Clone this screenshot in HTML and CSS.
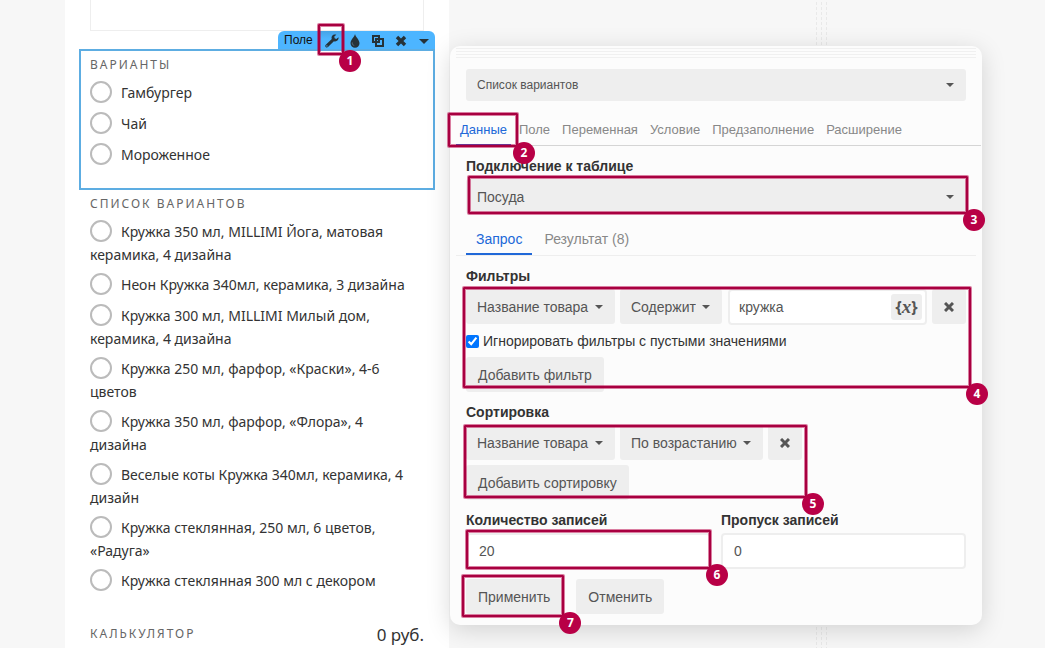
FILE: index.html
```html
<!DOCTYPE html>
<html lang="ru">
<head>
  <meta charset="UTF-8" />
  <meta name="viewport" content="width=device-width, initial-scale=1.0" />
  <title>Список вариантов</title>
  <link rel="stylesheet" href="styles.css">
</head>
<body>
  <div class="guides"></div>
  <div class="page">
    <main class="form">
      <div class="empty-field"></div>

      <div class="toolbar">
        <span class="toolbar-title">Поле</span>
        <button class="tool tool-active mark" aria-label="Настройки">
          <svg width="14" height="14" viewBox="0 0 14 14"><path d="M13.5 3.3 11.3 4.9 9.6 4.3 9.3 2.6 11.3.8C9.6.1 7.7.6 6.9 2.2c-.5 1-.4 1.9-.1 2.7L.8 10.7c-.7.7-.7 1.7-.1 2.3.6.7 1.7.7 2.3.1l5.9-5.9c1.3.5 2.8.2 3.8-.9.8-.8 1-2 .8-3zM1.9 12.6a.7.7 0 1 1 0-1.4.7.7 0 0 1 0 1.4z"/></svg>
          <span class="frame frame-tool"><span class="badge">1</span></span>
        </button>
        <button class="tool" aria-label="Цвет">
          <svg width="10" height="14" viewBox="0 0 10 14"><path d="M5 0C4.600 2.800.500 5.700.500 9.200a4.500 4.500 0 0 0 9 0C9.500 5.700 5.400 2.800 5 0z"/><path class="shine" d="M2.300 8.500c-.2 1.600.6 2.700 1.900 3"/></svg>
        </button>
        <button class="tool" aria-label="Копировать">
          <svg class="line-icon" width="12" height="12" viewBox="0 0 12 12"><path d="M1 1h6v6H1zM4 4h7v7H4z"/></svg>
        </button>
        <button class="tool" aria-label="Удалить">
          <svg width="12" height="12" viewBox="0 0 12 12"><path d="M3.200.8 6 3.600 8.800.8l2.400 2.400L8.400 6l2.800 2.800-2.400 2.400L6 8.400l-2.800 2.800L.8 8.800 3.600 6 .8 3.200z"/></svg>
        </button>
        <button class="tool" aria-label="Ещё">
          <svg width="10" height="5" viewBox="0 0 10 5"><path d="M0 0h10L5 5z"/></svg>
        </button>
      </div>

      <fieldset class="field field-selected">
        <legend class="field-title">Варианты</legend>
        <label class="option"><input type="radio" name="variant">Гамбургер</label>
        <label class="option"><input type="radio" name="variant">Чай</label>
        <label class="option"><input type="radio" name="variant">Мороженное</label>
      </fieldset>

      <fieldset class="field">
        <legend class="field-title">Список вариантов</legend>
        <label class="option"><input type="radio" name="mug">Кружка 350 мл, MILLIMI Йога, матовая керамика, 4 дизайна</label>
        <label class="option"><input type="radio" name="mug">Неон Кружка 340мл, керамика, 3 дизайна</label>
        <label class="option"><input type="radio" name="mug">Кружка 300 мл, MILLIMI Милый дом, керамика, 4 дизайна</label>
        <label class="option"><input type="radio" name="mug">Кружка 250 мл, фарфор, «Краски», 4-6 цветов</label>
        <label class="option"><input type="radio" name="mug">Кружка 350 мл, фарфор, «Флора», 4 дизайна</label>
        <label class="option"><input type="radio" name="mug">Веселые коты Кружка 340мл, керамика, 4 дизайн</label>
        <label class="option"><input type="radio" name="mug">Кружка стеклянная, 250 мл, 6 цветов, «Радуга»</label>
        <label class="option"><input type="radio" name="mug">Кружка стеклянная 300 мл с декором</label>
      </fieldset>

      <div class="total">
        <span class="field-title">Калькулятор</span>
        <output class="price">0 руб.</output>
      </div>
    </main>

    <aside class="panel">
      <div class="grip"></div>
      <div class="select select-type">
        <select aria-label="Тип поля"><option>Список вариантов</option></select>
      </div>

      <nav class="tabs">
        <a class="tab tab-active mark" href="#data">Данные<span class="frame frame-tab"><span class="badge">2</span></span></a>
        <a class="tab" href="#field">Поле</a>
        <a class="tab" href="#variable">Переменная</a>
        <a class="tab" href="#condition">Условие</a>
        <a class="tab" href="#prefill">Предзаполнение</a>
        <a class="tab" href="#extend">Расширение</a>
      </nav>

      <label class="label" for="table">Подключение к таблице</label>
      <div class="select mark">
        <select id="table"><option>Посуда</option></select>
        <span class="frame frame-table"><span class="badge">3</span></span>
      </div>

      <nav class="subtabs">
        <a class="subtab subtab-active" href="#query">Запрос</a>
        <a class="subtab" href="#result">Результат (8)</a>
      </nav>

      <div class="label">Фильтры</div>
      <div class="mark">
        <div class="row">
          <div class="select"><select aria-label="Поле фильтра"><option>Название товара</option></select></div>
          <div class="select"><select aria-label="Условие фильтра"><option>Содержит</option></select></div>
          <div class="value">
            <input type="text" value="кружка" aria-label="Значение">
            <button class="var" aria-label="Переменная">{<i>x</i>}</button>
          </div>
          <button class="btn remove" aria-label="Удалить фильтр">
            <svg width="10" height="10" viewBox="0 0 10 10"><path d="M1 1l8 8M9 1L1 9"/></svg>
          </button>
        </div>
        <label class="check"><input type="checkbox" checked>Игнорировать фильтры с пустыми значениями</label>
        <button class="btn">Добавить фильтр</button>
        <span class="frame frame-filters"><span class="badge">4</span></span>
      </div>

      <div class="label">Сортировка</div>
      <div class="mark sort">
        <div class="row">
          <div class="select"><select aria-label="Поле сортировки"><option>Название товара</option></select></div>
          <div class="select"><select aria-label="Порядок"><option>По возрастанию</option></select></div>
          <button class="btn remove" aria-label="Удалить сортировку">
            <svg width="10" height="10" viewBox="0 0 10 10"><path d="M1 1l8 8M9 1L1 9"/></svg>
          </button>
        </div>
        <button class="btn btn-next">Добавить сортировку</button>
        <span class="frame frame-sort"><span class="badge">5</span></span>
      </div>

      <div class="numbers">
        <div>
          <label class="label" for="limit">Количество записей</label>
          <div class="mark">
            <input class="input" type="text" id="limit" value="20">
            <span class="frame frame-limit"><span class="badge">6</span></span>
          </div>
        </div>
        <div>
          <label class="label" for="offset">Пропуск записей</label>
          <input class="input" type="text" id="offset" value="0">
        </div>
      </div>

      <div class="actions">
        <div class="mark">
          <button class="btn">Применить</button>
          <span class="frame frame-apply"><span class="badge">7</span></span>
        </div>
        <button class="btn">Отменить</button>
      </div>
    </aside>
  </div>
</body>
</html>
```

FILE: styles.css
```css
* {
  box-sizing: border-box;
}
body {
  margin: 0;
  background: #f7f7f7;
  color: #333;
  font-family: "Liberation Sans", Arial, sans-serif;
  font-size: 14px;
}
button,
input,
select {
  font: inherit;
  color: #555;
  margin: 0;
}
button {
  border: 0;
  cursor: pointer;
}
a {
  text-decoration: none;
}
.page {
  position: relative;
  display: grid;
  grid-template-columns: 384px minmax(0, 1fr);
  column-gap: 1px;
  align-items: start;
  min-height: 100vh;
  padding: 0 63px 0 65px;
}

/* dashed column guides behind the panel */
.guides {
  position: absolute;
  top: 0;
  bottom: 0;
  left: 816px;
  width: 11px;
  background: repeating-linear-gradient(#f7f7f7 0 2px, transparent 2px 5px),
    repeating-linear-gradient(90deg, #e9e9e9 0 1px, transparent 1px 5px);
}

/* form preview */
.form {
  align-self: stretch;
  background: #fff;
  padding: 0 14px;
  font-family: "Noto Sans", sans-serif;
}
.empty-field {
  height: 31px;
  margin: 0 11px;
  border: 1px solid #eee;
  border-top: 0;
}
.toolbar {
  display: flex;
  align-items: center;
  width: 157px;
  height: 18px;
  margin-left: auto;
  padding-left: 6px;
  background: #4db5ff;
  border-radius: 6px 6px 0 0;
  font: 12px/18px "Liberation Sans", Arial, sans-serif;
  color: #111;
}
.toolbar-title {
  width: 36px;
}
.tool {
  display: flex;
  align-items: center;
  justify-content: center;
  flex: 1;
  height: 18px;
  padding: 2px 0 0;
  background: none;
}
.tool-active {
  background: linear-gradient(#45a3e6, #4db5ff 8px);
}
.tool svg {
  fill: #263238;
}
.tool .line-icon {
  fill: #4db5ff;
  stroke: #263238;
  stroke-width: 2;
}
.tool .shine {
  fill: none;
  stroke: #5f7480;
}
.field {
  min-width: 0;
  margin: 0;
  padding: 0 11px;
  border: 0;
}
.field-selected {
  height: 141px;
  padding: 0 9px;
  border: 2px solid #5dade2;
}
.field-title {
  float: left;
  width: 100%;
  padding: 0;
  font-size: 12px;
  line-height: 28px;
  letter-spacing: 2px;
  text-transform: uppercase;
  color: #666;
}
.option {
  display: block;
  clear: both;
  padding: 0 8px 4px 0;
  font-size: 14px;
  line-height: 22px;
}
.option input {
  appearance: none;
  width: 22px;
  height: 22px;
  margin: 2px 9px 2px 0;
  border: 2px solid #bbb;
  border-radius: 50%;
  vertical-align: -7px;
}
.field-selected .option {
  padding-bottom: 5px;
}
.field:not(.field-selected) .option {
  padding-bottom: 5px;
}
.total {
  display: flex;
  align-items: center;
  justify-content: space-between;
  margin-top: 22px;
  padding: 0 11px;
}
.total .field-title {
  width: auto;
}
.price {
  font-size: 17px;
}

/* settings panel */
.panel {
  position: relative;
  margin-top: 46px;
  padding: 2px 16px 11px;
  background: #fcfcfc;
  border-radius: 10px;
  box-shadow: 0 5px 25px rgba(0, 0, 0, 0.15);
}
.grip {
  height: 10px;
  margin: 0 -10px 11px;
  background: repeating-linear-gradient(#f0f0f0 0 1px, transparent 1px 3px);
}
.select {
  position: relative;
}
.select select {
  appearance: none;
  display: block;
  width: 100%;
  height: 35px;
  padding: 0 26px 0 11px;
  background: #eee;
  border: 0;
  border-radius: 3px;
}
.select::after {
  content: "";
  position: absolute;
  top: 50%;
  right: 12px;
  margin-top: -2px;
  border: 4px solid transparent;
  border-top-color: #555;
  border-bottom: 0;
  pointer-events: none;
}
.select-type select {
  height: 32px;
  font-size: 12px;
}
.tabs {
  display: flex;
  gap: 4px;
  margin: 14px -15px 0 -10px;
  border-bottom: 1px solid #d5d5d5;
  font-size: 13px;
  line-height: 30px;
}
.tab {
  padding: 0 4px;
  color: #888;
}
.tab-active {
  color: #2068d8;
  box-shadow: inset 0 -1px #2068d8;
}
.label {
  display: block;
  margin: 10px 0 3px;
  font-weight: bold;
  line-height: 20px;
}
.subtabs {
  display: flex;
  gap: 2px;
  margin: 9px -10px 0;
  padding-left: 10px;
  border-bottom: 1px solid #eee;
  line-height: 32px;
}
.subtab {
  padding: 0 10px;
  color: #888;
}
.subtab-active {
  color: #2068d8;
  box-shadow: inset 0 -2px #2068d8;
}
.row {
  display: flex;
  gap: 5px;
}
.row .select {
  flex: none;
}
.btn {
  height: 35px;
  padding: 0 12px;
  background: #eee;
  border-radius: 3px;
}
.btn-next {
  margin-top: 5px;
}
.remove {
  display: flex;
  flex: none;
  align-items: center;
  justify-content: center;
  width: 34px;
  padding: 0;
}
.remove path {
  stroke: #555;
  stroke-width: 3;
}
.value {
  flex: 1;
  display: flex;
  align-items: center;
  min-width: 0;
  height: 36px;
  margin-left: 1px;
  padding: 0 3px 0 9px;
  background: #fff;
  border: 2px solid #eee;
  border-radius: 4px;
}
.value input {
  flex: 1;
  min-width: 0;
  padding: 0;
  border: 0;
}
.var {
  width: 31px;
  height: 26px;
  padding: 0;
  background: #eee;
  border-radius: 3px;
  font: bold 16px/24px "Noto Sans", sans-serif;
}
.var i {
  font-family: "Liberation Serif", serif;
  font-size: 19px;
}
.check {
  display: flex;
  align-items: center;
  gap: 4px;
  height: 32px;
}
.check input {
  width: 13px;
  height: 13px;
}
.sort {
  width: fit-content;
}
.numbers {
  display: grid;
  grid-template-columns: 1fr 1fr;
  gap: 10px;
}
.input {
  display: block;
  width: 100%;
  height: 36px;
  padding: 0 11px;
  background: #fff;
  border: 2px solid #eee;
  border-radius: 4px;
}
.actions {
  display: flex;
  gap: 14px;
  margin-top: 10px;
}

/* numbered callouts */
.mark {
  position: relative;
}
.frame {
  position: absolute;
  z-index: 1;
  border: 2px solid #a80040;
  border-radius: 1px;
  box-shadow: 0 0 0 1px rgba(184, 0, 70, 0.5), inset 0 0 0 1px rgba(184, 0, 70, 0.5);
  pointer-events: none;
}
.frame-tool {
  inset: -7px -1px -6px -2px;
}
.frame-tab {
  inset: -2px -7px -2px -8px;
}
.frame-table {
  inset: -3px -2px 0 2px;
}
.frame-filters {
  inset: -2px -5px 4px -3px;
}
.frame-sort {
  inset: 0 -5px 2px -2px;
}
.frame-limit {
  inset: -3px 0 0 0;
}
.frame-apply {
  inset: -4px -2px -3px -4px;
}
.badge {
  position: absolute;
  right: -19px;
  bottom: -19px;
  width: 22px;
  height: 22px;
  border-radius: 50%;
  background: #b80046;
  color: #fff;
  font: bold 12px/22px "Noto Sans", sans-serif;
  text-align: center;
}
```
